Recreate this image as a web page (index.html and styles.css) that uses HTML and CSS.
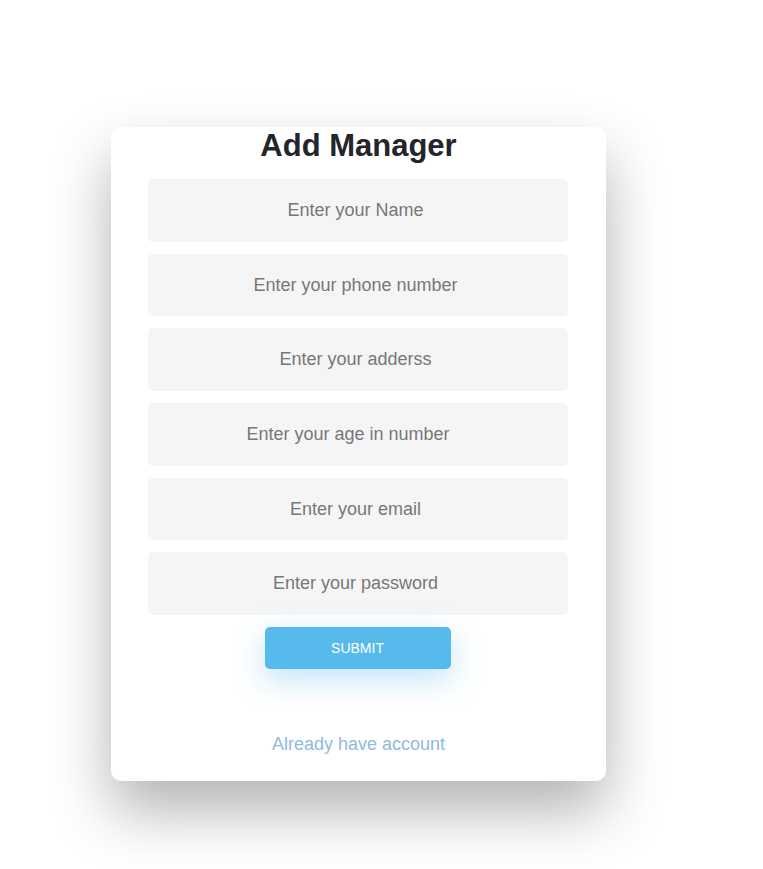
FILE: index.html
```html
<!DOCTYPE html>
<html lang="en">
<head>
<meta charset="utf-8">
<title>Add Manager</title>
<link rel="stylesheet" href="styles.css">
</head>
<body>
<main class="page">
  <section class="card">
    <h2 class="title">Add Manager</h2>
    <form class="form">
      <input class="field" type="text" placeholder="Enter your Name">
      <input class="field" type="text" placeholder="Enter your phone number">
      <input class="field" type="text" placeholder="Enter your adderss">
      <input class="field" type="number" placeholder="Enter your age in number">
      <input class="field" type="email" placeholder="Enter your email">
      <input class="field" type="password" placeholder="Enter your password">
      <button class="submit" type="button">Submit</button>
    </form>
    <a class="link" href="#">Already have account</a>
  </section>
</main>
</body>
</html>
```
FILE: styles.css
```css
html, body {
  margin: 0;
  padding: 0;
  background: #fff;
  font-family: "Liberation Sans", Arial, sans-serif;
}
.page {
  box-sizing: border-box;
  min-height: 869px;
  padding: 127px 0 100px 111px;
}
.card {
  width: 495px;
  box-sizing: border-box;
  background: #fff;
  border-radius: 10px;
  box-shadow: 0 30px 60px 0 rgba(0, 0, 0, 0.3);
  display: flex;
  flex-direction: column;
  align-items: center;
  padding: 0 0 26px;
}
.title {
  margin: 0;
  font-size: 31px;
  line-height: 37px;
  font-weight: 700;
  color: #23252a;
}
.form {
  margin-top: 15px;
  display: flex;
  flex-direction: column;
  align-items: center;
  gap: 12px;
  transform: translateX(-1px);
}
.field {
  width: 420px;
  height: 62.7px;
  box-sizing: border-box;
  background: #f5f5f5;
  border: none;
  border-radius: 5px;
  text-align: center;
  font-family: "Liberation Sans", Arial, sans-serif;
  font-size: 18px;
  color: #0d0d0d;
  outline: none;
  padding: 0 4px 0 0;
}
.field::placeholder {
  color: #777;
}
.submit {
  width: 186px;
  height: 42px;
  border: none;
  border-radius: 5px;
  background: #56baed;
  color: #fff;
  font-family: "Liberation Sans", Arial, sans-serif;
  font-size: 14px;
  text-transform: uppercase;
  box-shadow: 0 10px 30px 0 rgba(95, 186, 233, 0.4);
  padding: 0;
}
.link {
  margin-top: 65px;
  font-size: 18px;
  line-height: 21px;
  color: #92badd;
  text-decoration: none;
}
```
